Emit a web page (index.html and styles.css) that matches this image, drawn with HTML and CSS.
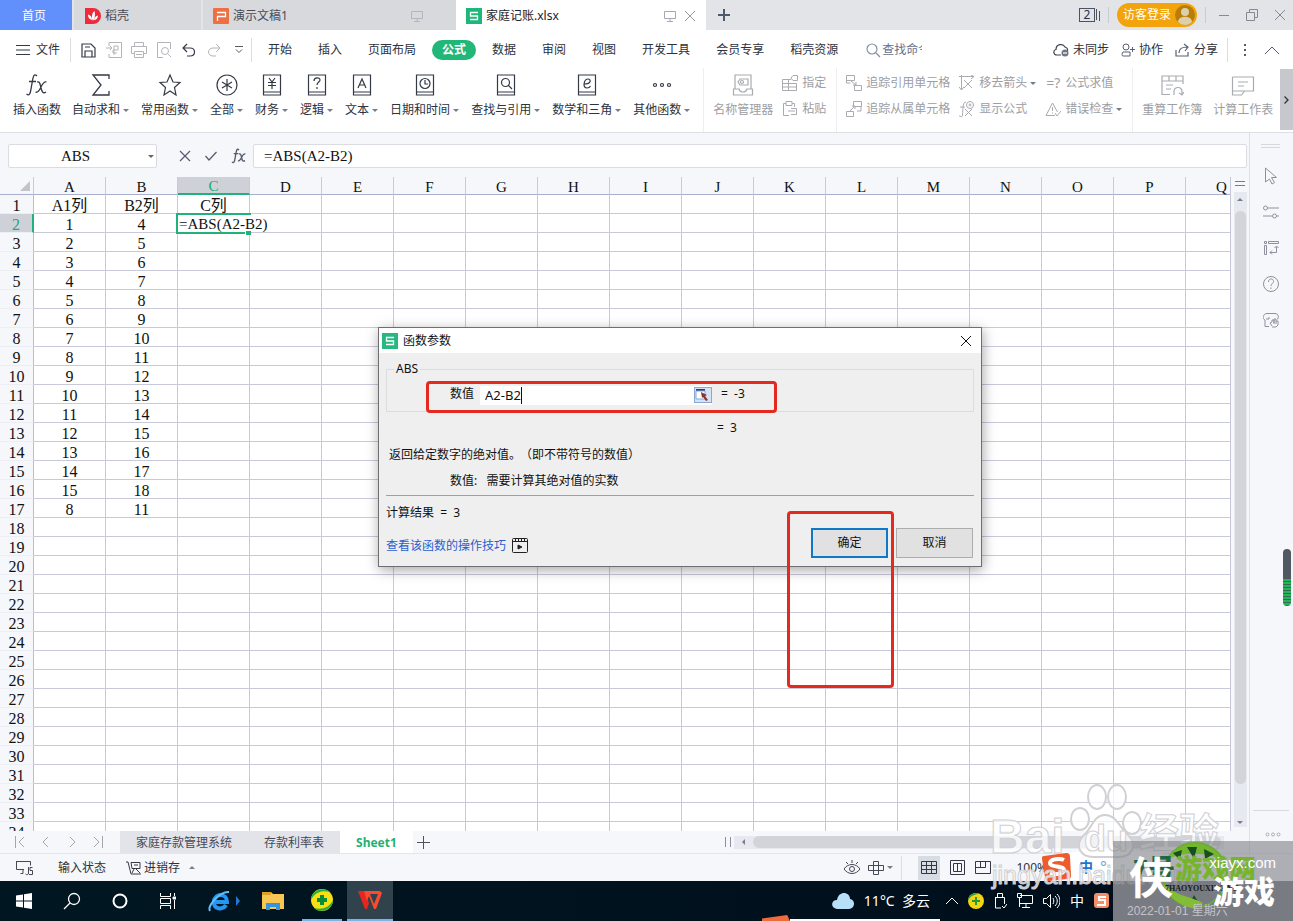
FILE: index.html
```html
<!DOCTYPE html>
<html lang="zh-CN">
<head>
<meta charset="utf-8">
<title>家庭记账.xlsx</title>
<link rel="stylesheet" href="styles.css">
</head>
<body>
<header class="titlebar">
  <button class="tab tab-home">首页</button>
  <button class="tab tab-docer"><svg width="16" height="16" viewBox="0 0 16 16"><path d="M0 0h8a8 8 0 0 1 0 16H0z" fill="#ee2a3c"/><path d="M8 13C6 9 7 5 9.500 3c1 3 .5 7-1.500 10zM7 12C3.500 11 3 8.500 3 6.500 5.500 7 7 9 7 12zM9 12c.5-3 2-4 4-4.500 0 2.500-1.500 4.500-4 4.500z" fill="#fff"/></svg><span>稻壳</span></button>
  <button class="tab tab-ppt"><svg width="16" height="16" viewBox="0 0 16 16"><rect width="16" height="16" rx="1" fill="#ee6f42"/><path d="M4 4.500h8.500v4H4.500V13" fill="none" stroke="#fff" stroke-width="1.300"/></svg><span>演示文稿1</span><svg class="tab-end" width="12" height="12" fill="none" stroke="#b4b6bd"><path d="M.5 1.500h11v7H.5zM6 8.500v3M3 11.500h6"/></svg></button>
  <button class="tab tab-active"><svg width="16" height="16" viewBox="0 0 16 16"><rect width="16" height="16" fill="#1fb67a"/><path d="M12 4.500H4.500V8h7v3.500H4" fill="none" stroke="#fff" stroke-width="1.300"/></svg><span>家庭记账.xlsx</span><svg class="tab-end" width="12" height="12" fill="none" stroke="#a5a8b5"><path d="M.5 1.500h11v7H.5zM6 8.500v3M3 11.500h6"/></svg><svg width="12" height="12" fill="none" stroke="#9497a3"><path d="M1 1l10 10M11 1L1 11"/></svg></button>
  <button class="tab-add" aria-label="新建"><svg width="12" height="12" stroke="#4e586e" stroke-width="2"><path d="M6 0v12M0 6h12"/></svg></button>
  <div class="window-tools">
    <span class="window-count"><b>2</b><svg width="4" height="12" stroke="#4d5261"><path d="M.5 0v11M3.500 2v10"/></svg></span>
    <i class="vline"></i>
    <button class="login">访客登录<svg width="20" height="20" viewBox="0 0 20 20"><circle cx="10" cy="10" r="10" fill="#b77d07"/><circle cx="10" cy="7" r="4" fill="#ddcfaa"/><path d="M3 17c0-7 14-7 14 0-4 4-10 4-14 0z" fill="#ddcfaa"/></svg></button>
    <i class="vline"></i>
    <button aria-label="最小化"><svg width="12" height="12" stroke="#858995"><path d="M1 6.500h10"/></svg></button>
    <button aria-label="还原"><svg width="12" height="12" fill="none" stroke="#858995"><path d="M.5 3.500h8v8h-8zM3.500 3V.5h8v8H9"/></svg></button>
    <button aria-label="关闭"><svg width="12" height="12" stroke="#858995"><path d="M1 1l10 10M11 1L1 11"/></svg></button>
  </div>
</header>

<nav class="menubar">
  <button class="file-menu"><svg width="14" height="10" stroke="#333846"><path d="M0 .5h14M0 5h14M0 9.500h14"/></svg>文件</button>
  <i class="vline"></i>
  <div class="quick">
    <button aria-label="保存"><svg width="15" height="15" fill="none" stroke="#363b49" stroke-width="1.200"><path d="M1 1h9l4 4v9H1zM4 14V8h7v6M4 4h5"/></svg></button>
    <button aria-label="输出PDF"><svg width="16" height="16" fill="none" stroke="#b3b5bb"><path d="M3 4V.5h12.500v15H3V12M0 6h6M4 4l2 2-2 2M8 13V4h4v4H7v3h4"/></svg></button>
    <button aria-label="打印"><svg width="16" height="16" fill="none" stroke="#b3b5bb"><path d="M3.500 4.500v-4h9v4M3.500 11.500h-3v-7h15v7h-3M3.500 9.500h9v6h-9zM5 12.500h6"/></svg></button>
    <button aria-label="预览"><svg width="16" height="16" fill="none" stroke="#b3b5bb"><path d="M7 15.500H1.500V.5h13V7"/><circle cx="9" cy="9" r="3.500"/><path d="M12 12l3 3"/></svg></button>
    <button aria-label="撤销"><svg width="14" height="14" fill="none" stroke="#363b49" stroke-width="1.200"><path d="M5 1L1 5l4 4M1 5h7c6 0 6 8 0 8H5"/></svg></button>
    <button aria-label="重做"><svg width="14" height="14" fill="none" stroke="#b3b5bb"><path d="M9 1l4 4-4 4M13 5H6c-6 0-6 8 0 8h3"/></svg></button>
    <button aria-label="更多"><svg width="8" height="8" fill="none" stroke="#555a66"><path d="M0 .5h8M1 3.500l3 3 3-3"/></svg></button>
  </div>
  <i class="vline"></i>
  <div class="menus">
    <button>开始</button><button>插入</button><button>页面布局</button><button class="current">公式</button><button>数据</button><button>审阅</button><button>视图</button><button>开发工具</button><button>会员专享</button><button>稻壳资源</button>
  </div>
  <button class="find"><svg width="15" height="15" fill="none" stroke="#8790a5" stroke-width="1.200"><circle cx="6" cy="6" r="5"/><path d="M10 10l4 4"/></svg><span>查找命令</span></button>
  <div class="share">
    <button><svg width="16" height="14" fill="none" stroke="#3d4352" stroke-width="1.200"><path d="M8 12H4C0 12 0 7 3 6.500 3 1 10 0 12 4c3 1 3 3 2 5"/><circle cx="12" cy="10" r="3.500" fill="#6f7787" stroke="none"/><path d="M10 10h4" stroke="#fff"/></svg>未同步</button>
    <button><svg width="14" height="14" fill="none" stroke="#596174"><circle cx="5" cy="4" r="3"/><path d="M9 9H2c-1 1-1.500 4 0 4h7V9M9 6.500h5M11.500 4v5"/></svg>协作</button>
    <button><svg width="15" height="14" fill="none" stroke="#596174" stroke-width="1.200"><path d="M1 7v6h12V9M4 10c0-4 3-6 8-6M9 1l4 3-3 4"/></svg>分享</button>
  </div>
  <i class="vline"></i>
  <button class="dots" aria-label="更多"><svg width="3" height="13" fill="#555b69"><path d="M0 0h2v2H0zM0 5h2v2H0zM0 10h2v2H0z"/></svg></button>
  <button class="fold" aria-label="收起"><svg width="14" height="8" fill="none" stroke="#555b69"><path d="M0 8l7-7 7 7"/></svg></button>
</nav>

<section class="ribbon">
  <div class="group main-group">
    <button class="tool"><svg width="24" height="24" fill="none" stroke="#343946" stroke-width="1.300"><path d="M12 3C8-1 8 6 6.500 13 5.500 19 5 24 1.500 21M4 8.500h7M12 9c3-1 3 2 4 6s2 6 5 4M21.500 9c-3-1-5 4-6 6s-3 5-5 4"/></svg><span>插入函数</span></button>
    <button class="tool"><svg width="24" height="24" fill="none" stroke="#343946" stroke-width="1.300"><path d="M20 6V2H4l8 10-8 10h16v-4"/></svg><span class="drop">自动求和</span></button>
    <button class="tool"><svg width="24" height="24" fill="none" stroke="#343946" stroke-width="1.200"><path d="M12 2l3 7 7 .5-5.500 5L18 22l-6-4-6 4 1.500-7.500L2 9.500 9 9z"/></svg><span class="drop">常用函数</span></button>
    <button class="tool"><svg width="24" height="24" fill="none" stroke="#343946" stroke-width="1.200"><circle cx="12" cy="12" r="10"/><path d="M12 6v12M7 9l10 6M17 9L7 15"/></svg><span class="drop">全部</span></button>
    <button class="tool"><svg width="24" height="24" fill="none" stroke="#343946" stroke-width="1.200"><path d="M3.500 2h17v20h-17zM3.500 19h17M9 5l3 4 3-4M12 9v7M8 9.500h8M8 12.500h8"/></svg><span class="drop">财务</span></button>
    <button class="tool"><svg width="24" height="24" fill="none" stroke="#343946" stroke-width="1.200"><path d="M3.500 2h17v20h-17zM3.500 19h17M9 8c0-4 6-4 6-1 0 2-3 2-3 5M12 14v2"/></svg><span class="drop">逻辑</span></button>
    <button class="tool"><svg width="24" height="24" fill="none" stroke="#343946" stroke-width="1.200"><path d="M3.500 2h17v20h-17zM3.500 19h17M8 15l4-9 4 9M9.500 12h5"/></svg><span class="drop">文本</span></button>
    <button class="tool"><svg width="24" height="24" fill="none" stroke="#343946" stroke-width="1.200"><path d="M3.500 2h17v20h-17zM3.500 19h17M12 7v4h3"/><circle cx="12" cy="10.500" r="5"/></svg><span class="drop">日期和时间</span></button>
    <button class="tool"><svg width="24" height="24" fill="none" stroke="#343946" stroke-width="1.200"><path d="M3.500 2h17v20h-17zM3.500 19h17M14 12l4 4"/><circle cx="11.500" cy="9.500" r="4"/></svg><span class="drop">查找与引用</span></button>
    <button class="tool"><svg width="24" height="24" fill="none" stroke="#343946" stroke-width="1.200"><path d="M3.500 2h17v20h-17zM3.500 19h17M9 11c8 0 7-5 4-5-4 0-6 9-1 9 2 0 3-1 3.500-2"/></svg><span class="drop">数学和三角</span></button>
    <button class="tool"><svg width="24" height="24" fill="none" stroke="#343946" stroke-width="1.200"><circle cx="5" cy="12" r="1.500"/><circle cx="12" cy="12" r="1.500"/><circle cx="19" cy="12" r="1.500"/></svg><span class="drop">其他函数</span></button>
  </div>
  <div class="group muted">
    <button class="tool"><svg width="24" height="24" fill="none" stroke="#a9abb0" stroke-width="1.200"><path d="M4 16V2h16v14M2.500 16H8c1 4 7 4 8 0h5.500v6h-19zM7 9l2-3h8v6H9z"/><circle cx="11" cy="9" r="1.500"/></svg><span>名称管理器</span></button>
    <div class="stack">
      <button><svg width="16" height="16" fill="none" stroke="#a9abb0"><path d="M9 4.500H.5v11h14v-7M.5 8.500h14M.5 12h14M6.500 4v11M9 3l2-2.500h4.500v5H11z"/></svg>指定</button>
      <button><svg width="16" height="16" fill="none" stroke="#a9abb0"><path d="M7 14.500H1.500v-12H4M10 2.500h2.500V6M4 .5h6v4H4zM6 10h7M9 7.500h5.500v6H9"/></svg>粘贴</button>
    </div>
  </div>
  <div class="group muted">
    <div class="stack">
      <button><svg width="16" height="16" fill="none" stroke="#a9abb0"><path d="M.5.5h8v5h-8zM.5 5v3h4M8.500 10.500h7v5h-7zM5 6l5 4M10 7v3H7"/></svg>追踪引用单元格</button>
      <button><svg width="16" height="16" fill="none" stroke="#a9abb0"><path d="M7.500.5h8v5h-8zM.5 10.500h7v5h-7zM4 10l5-5M6 5h3v3M15 5v5h-4"/></svg>追踪从属单元格</button>
    </div>
    <div class="stack">
      <button><svg width="16" height="16" fill="none" stroke="#a9abb0"><path d="M0 1.500h15M12 0l3 1.500L12 4M2.500 0v15M0 12l2.500 3L5 12M5 5l8 8M13 5l-8 8"/></svg><span class="drop">移去箭头</span></button>
      <button><svg width="16" height="16" fill="none" stroke="#a9abb0"><path d="M7 1C4 1 4 5 3.500 15 3 16 1 16 0 14.500M1 6h5M6 8l7 7M13 8l-7 7"/><circle cx="11" cy="4" r="3.500"/><circle cx="11" cy="4" r="1"/></svg>显示公式</button>
    </div>
    <div class="stack">
      <button><span class="equal-query">=?</span>公式求值</button>
      <button><svg width="16" height="16" fill="none" stroke="#a9abb0"><path d="M10 14.500H1L7.500 2l5 9M7.500 6v4M7.500 11.500v1M10 12l2 3 4-5"/></svg><span class="drop">错误检查</span></button>
    </div>
  </div>
  <div class="group muted last-group">
    <button class="tool"><svg width="24" height="24" fill="none" stroke="#a9abb0" stroke-width="1.200"><path d="M10 21.500H2V3h21v8M2 8h21M9 3v5M16 3v5M6 12h7M6 16h5M14 22v-3c0-6 8-6 8 0v3M19 20l3 2 2-3"/></svg><span>重算工作簿</span></button>
    <button class="tool"><svg width="24" height="24" fill="none" stroke="#a9abb0" stroke-width="1.200"><path d="M1.500 4h21v14h-9l-3 4h-9v-4h12M1.500 18V4M7 9h10M7 13h6"/></svg><span>计算工作表</span></button>
  </div>
  <button class="ribbon-next" aria-label="向右"><svg width="5" height="8" fill="none" stroke="#333" stroke-width="1.300"><path d="M.5.5L4 4 .5 7.500"/></svg></button>
</section>

<main class="work">
  <div class="book">
    <div class="formula-bar">
      <div class="name-box"><input aria-label="名称框" value="ABS"></div>
      <div class="formula-actions">
        <button aria-label="取消输入"><svg width="12" height="12" stroke="#555b6c" stroke-width="1.200"><path d="M1 1l10 10M11 1L1 11"/></svg></button>
        <button aria-label="确认输入"><svg width="12" height="12" fill="none" stroke="#555b6c" stroke-width="1.200"><path d="M.5 6l3.500 4L11.500 2"/></svg></button>
        <button aria-label="插入函数"><svg width="16" height="16" viewBox="0 0 24 24" fill="none" stroke="#555b6c" stroke-width="2"><path d="M12 3C8-1 8 6 6.500 13 5.500 19 5 24 1.500 21M4 8.500h7M12 9c3-1 3 2 4 6s2 6 5 4M21.500 9c-3-1-5 4-6 6s-3 5-5 4"/></svg></button>
      </div>
      <input class="formula" aria-label="编辑栏" value="=ABS(A2-B2)">
    </div>
    <div class="sheet">
      <div class="grid-view"><table class="grid" id="grid"></table></div>
      <div class="vscroll">
        <svg width="10" height="5" stroke="#777b88"><path d="M0 .5h10M0 4.500h10"/></svg>
        <div class="track"><i class="arrow up"></i><i class="thumb"></i><i class="arrow down"></i></div>
      </div>
    </div>
    <div class="sheet-tabs">
      <div class="sheet-nav">
        <svg width="10" height="12" fill="none" stroke="#a3a6b0"><path d="M.5 0v12M9 1L4 6l5 5"/></svg>
        <svg width="10" height="12" fill="none" stroke="#a3a6b0"><path d="M7 1L2 6l5 5"/></svg>
        <svg width="10" height="12" fill="none" stroke="#a3a6b0"><path d="M3 1l5 5-5 5"/></svg>
        <svg width="10" height="12" fill="none" stroke="#a3a6b0"><path d="M1 1l5 5-5 5M9.500 0v12"/></svg>
      </div>
      <button>家庭存款管理系统</button><button>存款利率表</button><button class="current">Sheet1</button>
      <button class="sheet-add" aria-label="新建工作表"><svg width="13" height="13" stroke="#4d5261"><path d="M6.500 0v13M0 6.500h13"/></svg></button>
      <div class="hscroll"><i class="arrow left"></i><i class="hthumb"></i></div>
    </div>
  </div>
  <aside class="sidebar">
    <svg width="19" height="5" stroke="#d6d8de"><path d="M0 .5h19M0 3.500h19"/></svg>
    <svg width="16" height="18" fill="none" stroke="#8d919d"><path d="M2.500 1l11 9.500h-5l3 5-2.500 1.500-2.500-5-4 3z"/></svg>
    <svg width="16" height="18" fill="none" stroke="#8d919d"><circle cx="2.500" cy="5" r="2"/><path d="M5 5h11M0 13h9M14 13h2"/><circle cx="11.500" cy="13" r="2"/></svg>
    <svg width="16" height="18" fill="none" stroke="#8d919d"><path d="M1.500 2.500h2v2h-2zM5.500 2.500h10v2h-10zM1.500 6.500h2v9h-2zM7 13.500h6.500v-6M11.500 9l2-2 2 2M9 11.500l-2 2 2 2"/></svg>
    <svg width="16" height="18" fill="none" stroke="#8d919d"><circle cx="8" cy="9" r="7.500"/><path d="M5.500 7c0-4 5-4 5-.5C10.500 8.500 8 8.500 8 11M8 12.500V14"/></svg>
    <svg width="16" height="18" fill="none" stroke="#8d919d"><path d="M6 15.500H2V9C-1 8 0 2.500 4 2.500h8c4 0 4 5 2 6M3 8h3V6M9 15l-2-3 2-1V9h2v4M11 12V8h2v5M13 10h2v4l-2 2H9"/></svg>
    <div class="more"><svg width="16" height="5" fill="none" stroke="#a9adb8"><circle cx="2.500" cy="2.500" r="1.500"/><circle cx="8" cy="2.500" r="1.500"/><circle cx="13.500" cy="2.500" r="1.500"/></svg></div>
  </aside>
</main>

<footer class="statusbar">
  <svg width="17" height="16" fill="none" stroke="#444956"><path d="M7 13.500H4.500M.5 1.500h14v4M.5 1v8.500H8M7 9.500v4M12.500 7v6c0 2-2 2-3 1M16.500 7.500H14v3h2.500v4H13"/></svg>
  <span class="status-text">输入状态</span>
  <span class="stock"><svg width="15" height="14" fill="none" stroke="#333846"><path d="M0 1h2l3 12h10M5 1.500h9v6H6zM8 4h4M8 8l-2 4M10 8l4 4"/></svg>进销存<i class="arrow up"></i></span>
  <div class="views">
    <svg width="16" height="16" fill="none" stroke="#444956"><path d="M0 9c4-6 12-6 16 0-4 6-12 6-16 0zM8 0v3M2 2l2 2M14 2l-2 2"/><circle cx="8" cy="9" r="2.500"/></svg>
    <span class="drop"><svg width="16" height="14" fill="none" stroke="#444956"><path d="M.5 4.500h15v5H.5zM5.500.5h5v13h-5z"/></svg></span>
    <i class="vline"></i>
    <button class="view-on" aria-label="普通视图"><svg width="16" height="13" fill="none" stroke="#333846"><path d="M.5.5h15v12H.5zM.5 4.500h15M.5 8.500h15M5.500.5v12M10.500.5v12"/></svg></button>
    <button aria-label="页面布局"><svg width="15" height="15" fill="none" stroke="#333846"><path d="M.5.5h14v14H.5zM3.500 3.500h8v8h-8zM7.500 3v9"/></svg></button>
    <button aria-label="分页预览"><svg width="16" height="13" fill="none" stroke="#333846"><path d="M.5.5h15v12H.5zM.5 6.500h10V.5M5.500.5v6"/></svg></button>
    <span class="zoom">100%</span>
  </div>
</footer>

<footer class="taskbar">
  <div class="apps">
    <button aria-label="开始"><svg width="16" height="16" fill="#fff"><path d="M0 2.500l7-1V7.500H0zM8 1.300L16 0v7.500H8zM0 8.500h7v6l-7-1zM8 8.500h8V16l-8-1.300z"/></svg></button>
    <button aria-label="搜索"><svg width="18" height="18" fill="none" stroke="#fff" stroke-width="1.300"><circle cx="11" cy="7" r="5.500"/><path d="M7 11l-6 6"/></svg></button>
    <button aria-label="Cortana"><svg width="16" height="16" fill="none" stroke="#fff" stroke-width="2"><circle cx="8" cy="8" r="6.500"/></svg></button>
    <button aria-label="任务视图"><svg width="16" height="16" fill="none" stroke="#fff"><path d="M.5 0v3.500h10V0M.5 5.500h10v5H.5zM.5 16v-3.500h10V16M14.500 0v3M14.500 7v9"/><path d="M13 4h3v2h-3z" fill="#fff"/></svg></button>
    <button class="ie" aria-label="浏览器"><svg width="32" height="24" fill="none"><path d="M5 13h14c0-9-12-9-13-1-1 9 9 9 12 4" stroke="#2696f3" stroke-width="4"/><path d="M2 22C-1 17 12 2 21 3" stroke="#62bff8" stroke-width="2"/><path d="M28 7l4 5-4 5z" fill="#2378dc"/></svg></button>
    <button class="folder" aria-label="文件夹"><svg width="22" height="18"><path d="M0 0h9l2 2h11v15H0z" fill="#f8c653"/><path d="M0 0h9v3H0z" fill="#dfa023"/><path d="M4 18v-7h14v7h-4v-3H8v3z" fill="#3795dc"/></svg></button>
    <button class="opened" aria-label="安全卫士"><svg width="24" height="24"><circle cx="12" cy="12" r="11" fill="#f6df12"/><path d="M1 12C1 2 14-2 20 4 12 2 5 4 1 12zM23 12c0 10-13 14-19 8 8 2 15 0 19-8z" fill="#25ae43"/><path d="M10 7h4v3h3v4h-3v3h-4v-3H7v-4h3z" fill="#098c37"/></svg></button>
    <button class="opened focus" aria-label="WPS"><svg width="24" height="20"><path d="M0 1h6l5 12-2 6H7z" fill="#e8261f"/><path d="M6 1h16l2 2-6 16h-2L11 6 9 11z" fill="#fb4a2d"/><path d="M12 4l4 10 4-10z" fill="#30434c"/></svg></button>
  </div>
  <div class="tray">
    <svg width="22" height="16"><path d="M5 16C-2 15-1 7 5 7c2-10 13-8 13-1 6 1 5 10-1 10z" fill="#b7e0f8"/></svg>
    <span class="weather">11°C&nbsp; 多云</span>
    <svg width="12" height="8" fill="none" stroke="#fff"><path d="M0 7l6-6 6 6"/></svg>
    <svg width="16" height="16"><circle cx="8" cy="8" r="8" fill="#f3d611"/><path d="M7 4h2v3h3v2H9v3H7V9H4V7h3zM0 8c0-7 8-9 12-7C6 1 2 3 0 8z" fill="#249b38"/></svg>
    <svg width="13" height="16" fill="none" stroke="#fff"><path d="M3.500.5h5v4h-5zM1.500 4.500h9V11M1.500 4v11H7M8 13l2 2 3-4"/></svg>
    <svg width="16" height="16" fill="none" stroke="#fff"><path d="M3 2.500h12.500v8H3M5 14.500h8M9 10v4M.5.5h4v4h-4zM2.500 4v10"/></svg>
    <svg width="17" height="16" fill="none" stroke="#fff"><path d="M.5 5.500h3l4-4v13l-4-4h-3zM10 5c1 2 1 4 0 6M12 3c3 3 3 7 0 10M14 1c4 4 4 10 0 14"/></svg>
    <span>中</span>
    <svg width="16" height="16"><rect width="15" height="15" rx="3" fill="#f48d68"/><path d="M12 4H5v3h6v5H3" fill="none" stroke="#fff" stroke-width="2"/></svg>
  </div>
</footer>

<form class="dialog" aria-label="函数参数">
  <div class="dialog-title"><svg width="16" height="16" viewBox="0 0 16 16"><rect width="16" height="16" fill="#25b980"/><path d="M12 4.500H4.500V8h7v3.500H4" fill="none" stroke="#fff" stroke-width="1.300"/></svg><span>函数参数</span><button type="button" aria-label="关闭"><svg width="12" height="12" stroke="#111"><path d="M1 1l10 10M11 1L1 11"/></svg></button></div>
  <div class="dialog-body">
    <fieldset>
      <legend>ABS</legend>
      <label for="num">数值</label>
      <span class="num-field"><input id="num" value="A2-B2"><i class="text-caret"></i><button type="button" aria-label="选择区域"><svg width="18" height="16"><rect x=".5" y=".5" width="17" height="15" fill="#d5e3f7" stroke="#8ba7d3"/><path d="M2 2h9v2H2z" fill="#263a85"/><path d="M2 4h9v8H2z" fill="#fff" stroke="#8ba7d3"/><path d="M7 5l6 3-2 1 3 4-2 1-3-4-1 1z" fill="#8b3530"/></svg></button></span>
      <output>=&nbsp; -3</output>
    </fieldset>
    <p class="result">=&nbsp; 3</p>
    <p class="about">返回给定数字的绝对值。<span>（即不带符号的数值）</span></p>
    <p class="argument">数值:&nbsp;&nbsp; 需要计算其绝对值的实数</p>
    <hr>
    <p class="total">计算结果&nbsp; =&nbsp; 3</p>
    <div class="dialog-foot">
      <a href="#">查看该函数的操作技巧<svg width="16" height="15" fill="none" stroke="#222"><rect x=".5" y=".5" width="15" height="14" rx="1"/><path d="M.5 3.500h15M3.500.5v3M6.500.5v3M9.500.5v3M12.500.5v3"/><path d="M6 7l4 2-4 2z" fill="#222"/></svg></a>
      <button type="button" class="ok">确定</button><button type="button">取消</button>
    </div>
  </div>
</form>
<div class="mark mark-input"></div>
<div class="mark mark-ok"></div>
<div class="meter"></div>
<div class="toast-edge"></div>

<div class="ime"><svg width="30" height="30"><path d="M2 4l22-3c3 0 4 1 4 4l1 18c0 3-1 4-4 4L7 29c-3 0-4-1-4-4L0 7c0-2 0-3 2-3z" fill="#ee5b2d"/><path d="M22 8c-4-2-14-1-14 3 0 5 14 2 14 7 0 4-9 5-14 3" fill="none" stroke="#fff" stroke-width="4"/></svg><b>中</b><span>°,</span></div>
<div class="watermark">
  <svg width="80" height="76"><g fill="#fff" fill-opacity=".7" stroke="#d0d0d4" stroke-width="2"><ellipse cx="12" cy="36" rx="9" ry="11"/><ellipse cx="29" cy="14" rx="9" ry="12"/><ellipse cx="49" cy="14" rx="9" ry="12"/><ellipse cx="64" cy="40" rx="9" ry="11"/><path d="M37 32c12 0 15 14 24 21 9 10 2 21-10 21H25c-12 0-19-11-10-21 9-7 10-21 22-21z"/></g></svg>
  <span class="wm-name">Bai</span><span class="wm-du">du</span><span class="wm-cn">经验</span><span class="wm-url">jingyan.baidu.com</span></div>
<div class="corner">
  <svg width="96" height="70"><circle cx="46" cy="34" r="32" fill="none" stroke="#69ab32" stroke-width="2"/><path d="M16 20C32-4 62-4 76 22 64 10 30 10 16 20z" fill="#72b72d"/><path d="M38 6h10l-3 12zM24 12l9-3-2 10zM55 8l10 5-9 5zM40 64l5-10 6 10z" fill="#184e22"/><path d="M14 42c10 12 26 13 40 20l-8 6C30 64 18 56 14 42z" fill="#83bd37"/></svg>
  <span class="site"><b>7号</b>游戏网</span>
  <span class="pinyin">7HAOYOUXIWANG</span>
  <span class="date">2022-01-01 星期六</span>
  <span class="hero">侠</span><span class="game">游戏</span><span class="domain">xiayx.com</span>
</div>
<script src="app.js"></script>
</body>
</html>
```
FILE: styles.css
```css
* { box-sizing: border-box; }
body {
  margin: 0; height: 100vh; min-height: 600px; overflow: hidden; position: relative;
  display: flex; flex-direction: column;
  font: 12px/16px "Noto Sans", "Noto Sans CJK SC", sans-serif; color: #2d3240; background: #fff;
}
button { border: 0; padding: 0; background: none; font: inherit; color: inherit; white-space: nowrap; }
input { font: inherit; color: inherit; min-width: 0; }
svg { display: block; flex: none; }
p { margin: 0; }
.vline { width: 1px; height: 24px; background: #dcdde1; flex: none; }

.titlebar { height: 30px; flex: none; display: flex; align-items: stretch; background: #e3e4e8; }
.tab { display: flex; align-items: center; background: #d8d9dd; color: #484c59; padding-top: 2px; }
.tab svg + span { margin-left: 4px; }
.tab-end { margin-left: auto; }
.tab-home { width: 72px; justify-content: center; padding-right: 4px; background: #618ffb; color: #fff; margin-right: 2px; }
.tab-docer { width: 127px; padding-left: 11px; margin-right: 2px; }
.tab-ppt { width: 253px; padding: 2px 33px 0 10px; }
.tab-active { width: 250px; padding: 2px 10px 0; background: #fff; color: #20232c; }
.tab-active .tab-end { margin-right: 8px; }
.tab-add { width: 36px; display: grid; place-items: center; }
.window-tools { margin-left: auto; display: flex; align-items: center; gap: 8px; padding-right: 3px; }
.window-tools .vline { height: 16px; background: #c9cbd2; }
.window-tools > button:not(.login) { width: 20px; display: grid; place-items: center; }
.window-count { display: flex; align-items: center; gap: 1px; }
.window-count b { width: 16px; height: 14px; border: 1px solid #4d5261; line-height: 12px; text-align: center; font-weight: 400; }
.login { display: flex; align-items: center; gap: 4px; height: 24px; border-radius: 12px; background: #f3a40d; color: #fff; padding: 0 2px 0 6px; }

.menubar { height: 38px; flex: none; display: flex; align-items: center; padding: 2px 14px 0 0; }
.file-menu { width: 70px; display: flex; align-items: center; gap: 6px; padding-left: 16px; }
.quick { width: 180px; display: flex; align-items: center; padding-left: 5px; }
.quick button { width: 25px; display: grid; place-items: center; }
.menus { display: flex; align-items: center; gap: 26px; padding-left: 16px; }
.menus .current { height: 20px; padding: 0 10px; margin: 0 -10px; border-radius: 10px; background: #20b779; color: #fff; font-weight: 700; }
.find { display: flex; align-items: center; gap: 1px; margin-left: 28px; color: #66708a; }
.find span { width: 40px; overflow: hidden; text-align: left; }
.share { margin-left: auto; display: flex; gap: 12px; padding-right: 9px; }
.share button { display: flex; align-items: center; gap: 4px; }
.dots { padding: 0 18px 0 16px; }

.ribbon { height: 65px; flex: none; display: flex; border-bottom: 1px solid #dcdfe4; overflow: hidden; }
.group { display: flex; flex: none; padding: 5px 10px 0 9px; gap: 9px; }
.group + .group { border-left: 1px solid #eeeff2; }
.main-group { gap: 12px; padding: 5px 13px 0 13px; }
.main-group .tool:first-child { margin-right: -1px; }
.tool { display: flex; flex-direction: column; align-items: center; gap: 5px; height: 48px; }
.drop { display: inline-flex; align-items: center; gap: 3px; }
.drop::after { content: ""; border: 3px solid transparent; border-top-color: #777c88; border-bottom: 0; width: 0; height: 0; }
.muted { color: #9c9ea4; }
.stack { display: flex; flex-direction: column; gap: 10px; padding-top: 2px; }
.stack button { display: flex; align-items: center; gap: 4px; height: 16px; }
.equal-query { width: 16px; font-size: 14px; }
.last-group { gap: 11px; padding-right: 0; }
.ribbon-next { width: 13px; margin: 1px 0 2px auto; display: grid; place-items: center; background: #c6c8ce; flex: none; }

.work { flex: 1; min-height: 0; display: flex; background: #f5f7fa; }
.book { flex: 1; min-width: 0; display: flex; flex-direction: column; }
.formula-bar { height: 44px; flex: none; display: flex; align-items: center; padding: 2px 2px 0 8px; font: 15px/18px "Liberation Serif", "Noto Sans CJK SC", serif; color: #111; }
.name-box { width: 149px; height: 24px; position: relative; }
.name-box input { width: 100%; height: 24px; text-align: center; padding: 0 14px 0 0; border: 1px solid #dadce2; border-radius: 2px; background: #fff; }
.name-box::after { content: ""; position: absolute; right: 3px; top: 11px; border: 3px solid transparent; border-top-color: #666; border-bottom: 0; }
.formula-actions { display: flex; align-items: center; width: 96px; gap: 14px; padding-left: 22px; }
.formula { flex: 1; height: 24px; padding: 0 10px; border: 1px solid #dadce2; border-radius: 2px; background: #fff; }

.sheet { flex: 1; min-height: 0; display: flex; overflow: hidden; }
.grid-view { flex: 1; min-width: 0; overflow: hidden; border-right: 1px solid #c6c8d8; }
.grid { table-layout: fixed; width: 1258px; border-collapse: separate; border-spacing: 0; background: #fff; font: 16px/14px "Liberation Serif", "Noto Sans CJK SC", serif; color: #111; }
.grid .row-head { width: 34px; }
.grid .col { width: 72px; }
.grid th, .grid td { height: 19px; padding: 4px 0 0; text-align: center; font-weight: 400; border-right: 1px solid #c9c9dc; border-bottom: 1px solid #c9c9dc; white-space: nowrap; }
.grid th { background: #f5f7fa; }
.grid thead th { height: 18px; padding: 2px 0 0; font-size: 15px; border-bottom-color: #a9b0cd; }
.grid tbody th { border-right-color: #b9bdd0; border-bottom-color: #eceef3; }
.grid thead .picked { background: #cfd1d9; color: #20a877; border-bottom: 2px solid #22b07b; }
.grid tbody .picked { background: #cfd1d9; color: #20a877; border-right: 2px solid #22b07b; }
.grid .corner-cell { position: relative; }
.corner-cell::after { content: ""; position: absolute; right: 3px; bottom: 3px; border-left: 10px solid transparent; border-bottom: 10px solid #c2c4ca; }
.grid .editing { position: relative; }
.editor { position: absolute; left: -2px; top: -1px; width: 75px; height: 21px; border: 2px solid #22b07b; border-right: 0; background: #fff; text-align: left; font-size: 15px; line-height: 18px; z-index: 1; padding-left: 1px; }
.editor span { background: #fff; }
.editor::after { content: ""; position: absolute; right: 0; bottom: -3px; width: 5px; height: 4px; background: #22b07b; border-left: 1px solid #fff; }
.vscroll { width: 18px; flex: none; display: flex; flex-direction: column; align-items: center; gap: 6px; padding: 4px 0; }
.track { flex: 1; width: 13px; display: flex; flex-direction: column; align-items: center; padding-top: 3px; background: #e7e9f0; }
.thumb { width: 11px; flex: 1; margin: 10px 0 37px; border-radius: 6px; background: #d2d4da; }
.arrow { width: 0; height: 0; flex: none; border: 3px solid transparent; }
.arrow.up { border-bottom-color: #7b7f8b; }
.arrow.down { border-top-color: #7b7f8b; }
.arrow.left { border-right-color: #7b7f8b; }

.sheet-tabs { height: 22px; flex: none; display: flex; align-items: stretch; color: #434857; }
.sheet-nav { width: 120px; display: flex; align-items: center; gap: 16px; padding-left: 15px; }
.sheet-tabs > button { padding: 2px 16px 0; background: #e3e4ea; }
.sheet-tabs > .current { background: #fff; color: #1fb174; font-weight: 700; }
.sheet-tabs > .sheet-add { padding: 0 4px; background: none; }
.hscroll { margin-left: auto; width: 522px; display: flex; align-items: center; gap: 8px; padding: 0 28px 0 12px; position: relative; background: linear-gradient(#e7e9f0, #e7e9f0) 7px 5px / 490px 13px no-repeat; }
.hscroll::before { content: ""; position: absolute; left: -2px; top: 6px; width: 4px; height: 10px; border: 1px solid #8b8fa0; border-width: 0 1px; }
.hthumb { flex: 1; height: 12px; border-radius: 6px; background: #d2d4da; }
.sidebar { width: 44px; flex: none; display: flex; flex-direction: column; align-items: center; gap: 18px; padding: 11px 2px 0 0; border-left: 1px solid #dcdfe5; }
.more { margin-top: auto; width: 36px; border-top: 1px solid #d8dae0; padding: 21px 0 16px 12px; }

.statusbar { height: 28px; flex: none; display: flex; align-items: center; padding-left: 16px; background: #f5f7fa; border-top: 1px solid #e4e6eb; }
.status-text { margin-left: 25px; }
.stock { display: flex; align-items: center; gap: 3px; margin-left: 20px; }
.stock .arrow { margin: -3px 0 0 6px; }
.views { margin-left: auto; display: flex; align-items: center; gap: 8px; padding-right: 246px; }
.views button { width: 18px; height: 24px; display: grid; place-items: center; }
.views .view-on { width: 22px; background: #d8dce3; margin-left: 8px; }
.zoom { padding-left: 16px; }

.taskbar { height: 40px; flex: none; display: flex; background: linear-gradient(90deg, #001721, #000d1b); color: #fff; }
.apps { display: flex; }
.apps button { width: 48px; display: grid; place-items: center; }
.apps .ie { width: 56px; padding-left: 8px; }
.apps .folder { width: 50px; }
.apps .opened { border-bottom: 2px solid #76b4ea; margin: 0 2px 0 4px; width: 40px; }
.apps .focus { background: #30434c; margin: 0 0 0 3px; width: 46px; }
.tray { margin-left: auto; display: flex; align-items: center; gap: 10px; padding-right: 183px; font-size: 14px; }
.tray .weather { margin: 0 6px 0 0; }

.dialog { position: absolute; left: 378px; top: 327px; width: 604px; border: 1px solid #6f6f73; background: #efefef; color: #111; box-shadow: 1px 3px 12px rgba(0,0,0,.35); }
.dialog-title { height: 25px; background: #fff; display: flex; align-items: center; gap: 5px; padding: 0 9px 0 3px; }
.dialog-title button { margin-left: auto; }
.dialog-body { padding: 8px 7px; }
fieldset { margin: 0; border: 1px solid #dcdcdc; height: 51px; padding: 0 0 0 63px; display: flex; align-items: center; min-width: 0; }
legend { margin-left: -56px; padding: 0 2px; }
.num-field { width: 232px; height: 19px; margin: 2px 9px 0 6px; display: flex; align-items: center; background: #fff; position: relative; }
.num-field input { flex: 1; border: 0; padding: 0 0 0 5px; background: none; outline: 0; font-size: 13px; }
.text-caret { position: absolute; left: 41px; top: 1px; width: 1px; height: 17px; background: #111; }
.result { padding: 8px 0 0 331px; }
.about { padding: 11px 0 0 3px; }
.about span { padding-left: 5px; }
.argument { padding: 10px 0 0 64px; }
.dialog hr { margin: 6px 0 9px; border: 0; border-top: 1px solid #a0a0a0; }
.dialog-foot { display: flex; align-items: center; gap: 8px; padding: 7px 1px 0 0; }
.dialog-foot a { display: flex; align-items: center; gap: 6px; margin-right: auto; color: #2b5dcc; text-decoration: none; padding-top: 5px; }
.dialog-foot button { width: 77px; height: 30px; background: #e1e1e1; border: 1px solid #adadad; }
.dialog-foot .ok { border: 2px solid #0f78c8; }

.mark { position: absolute; border: 3px solid #e4291e; border-radius: 4px; pointer-events: none; }
.mark-input { left: 426px; top: 381px; width: 351px; height: 32px; }
.mark-ok { left: 787px; top: 511px; width: 107px; height: 177px; }
.meter { position: absolute; right: 2px; top: 549px; width: 8px; height: 57px; border-radius: 4px; background: linear-gradient(#515860 52%, transparent 52%), repeating-linear-gradient(#25b35e 0 2px, #386a4c 2px 3px); }
.toast-edge { position: absolute; left: 790px; bottom: 0; width: 150px; height: 2px; background: #fff; }
.toast-edge::before { content: ""; position: absolute; left: -28px; bottom: 0; width: 28px; height: 6px; background: #ef6b3e; clip-path: polygon(0 60%, 90% 0, 100% 100%, 0 100%); }

.ime { position: absolute; right: 131px; bottom: 40px; width: 120px; height: 29px; display: flex; align-items: center; gap: 7px; background: linear-gradient(90deg, transparent 20px, #fff 20px); color: #1b75d0; }
.ime b { font-size: 14px; }
.ime span { font-size: 16px; color: #79a9df; }
.watermark { position: absolute; right: 70px; bottom: 20px; width: 233px; height: 120px; color: rgba(255,255,255,.8); -webkit-text-stroke: 1px #cfcfd4; font-family: "Liberation Sans", "Noto Sans CJK SC", sans-serif; font-weight: 700; }
.watermark > * { position: absolute; }
.watermark svg { left: 78px; top: 2px; }
.wm-name { left: 0; top: 32px; font-size: 48px; line-height: 48px; }
.wm-du { left: 94px; top: 40px; font-size: 36px; line-height: 36px; }
.wm-cn { right: 4px; top: 24px; font-size: 40px; line-height: 56px; }
.wm-url { left: 2px; top: 80px; font-size: 25px; line-height: 28px; font-weight: 400; }
.corner { position: absolute; right: 0; bottom: 0; width: 180px; height: 80px; background: linear-gradient(rgba(130,131,137,.62) 50%, rgba(134,135,141,.9) 50%); color: #fff; font-family: "Liberation Sans", "Noto Sans CJK SC", sans-serif; }
.corner > * { position: absolute; white-space: nowrap; }
.corner svg { left: 36px; top: 0; }
.site { left: 20px; top: 12px; font-size: 27px; line-height: 34px; font-weight: 900; color: #76b42c; }
.site b { color: #236545; }
.pinyin { left: 52px; top: 43px; font: 700 8px/10px "Liberation Serif", serif; color: #151c16; }
.hero { left: 16px; top: 16px; font-size: 44px; line-height: 44px; font-weight: 700; }
.game { right: 18px; top: 34px; font-size: 31px; line-height: 36px; font-weight: 900; }
.domain { right: 17px; top: 13px; font-size: 15px; line-height: 18px; }
.date { left: 14px; bottom: 2px; font-size: 12px; color: #c3c3c8; }
```
FILE: app.js
```javascript
const columns = [..."ABCDEFGHIJKLMNOPQ"];
const first = [1, 2, 3, 4, 5, 6, 7, 8, 9, 10, 11, 12, 13, 14, 15, 8];
const data = { 1: ["A1列", "B2列", "C列"] };
first.forEach((n, i) => { data[i + 2] = [n, n + 3]; });

let html = '<colgroup><col class="row-head">' + columns.map(() => '<col class="col">').join("") + "</colgroup>";
html += '<thead><tr><th class="corner-cell"></th>' +
  columns.map(c => `<th scope="col"${c === "C" ? ' class="picked"' : ""}>${c}</th>`).join("") + "</tr></thead><tbody>";
for (let r = 1; r <= 34; r++) {
  html += `<tr><th scope="row"${r === 2 ? ' class="picked"' : ""}>${r}</th>`;
  columns.forEach((c, i) => {
    html += r === 2 && c === "C"
      ? '<td class="editing"><div class="editor"><span>=ABS(A2-B2)</span></div></td>'
      : `<td>${(data[r] || [])[i] ?? ""}</td>`;
  });
  html += "</tr>";
}
document.getElementById("grid").innerHTML = html + "</tbody>";
```
